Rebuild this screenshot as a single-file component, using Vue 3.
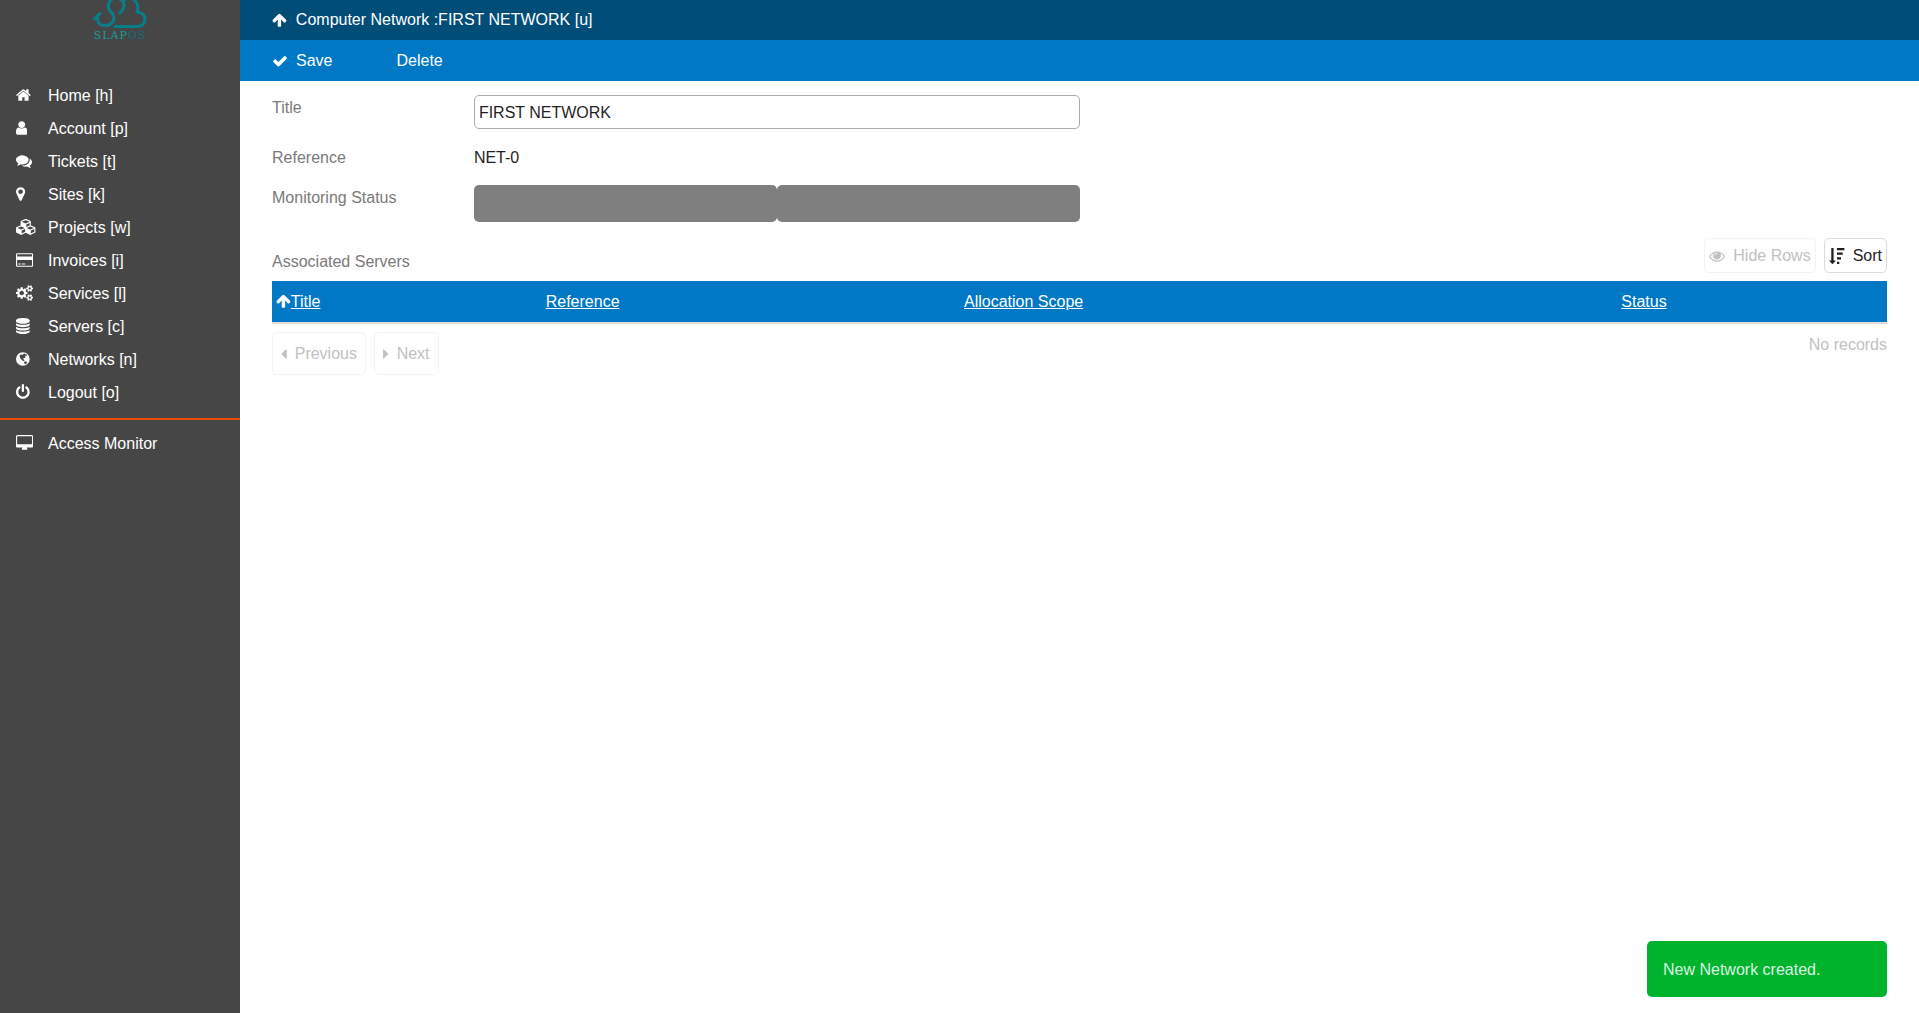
<script setup>
import { ref } from 'vue'

const icons = {
  home: ['64 0 1664 1792', 'M1472 992v480q0 26-19 45t-45 19h-384v-384h-256v384h-384q-26 0-45-19t-19-45v-480q0-1 .5-3t.5-3l575-474 575 474q1 2 1 6zm223-69l-62 74q-8 9-21 11h-3q-13 0-21-7l-692-577-692 577q-12 8-24 7-13-2-21-11l-62-74q-8-10-7-23.5t11-21.5l719-599q32-26 76-26t76 26l244 204v-195q0-14 9-23t23-9h192q14 0 23 9t9 23v408l219 182q10 8 11 21.5t-7 23.5z'],
  user: ['256 0 1280 1792', 'M1536 1399q0 109-62.5 187t-150.5 78h-854q-88 0-150.5-78t-62.5-187q0-85 8.5-160.5t31.5-152 58.5-131 94-89 134.5-34.5q131 128 313 128t313-128q76 0 134.5 34.5t94 89 58.5 131 31.5 152 8.5 160.5zm-256-887q0 159-112.5 271.5t-271.5 112.5-271.5-112.5-112.5-271.5 112.5-271.5 271.5-112.5 271.5 112.5 112.5 271.5z'],
  comments: ['0 0 1792 1792', 'M1408 768q0 139-94 257t-256.5 186.5-353.5 68.5q-86 0-176-16-124 88-278 128-36 9-86 16h-3q-11 0-20.5-8t-11.5-21q-1-3-1-6.5t.5-6.5 2-6l2.5-5 3.5-5.5 4-5 4.5-5 4-4.5q5-6 23-25t26-29.5 22.5-29 25-38.5 20.5-44q-124-72-195-177t-71-224q0-139 94-257t256.5-186.5 353.5-68.5 353.5 68.5 256.5 186.5 94 257zm384 256q0 120-71 224.5t-195 176.5q10 24 20.5 44t25 38.5 22.5 29 26 29.5 23 25q1 1 4 4.5t4.5 5 4 5 3.5 5.5l2.5 5 2 6 .5 6.5-1 6.5q-3 14-13 22t-22 7q-50-7-86-16-154-40-278-128-90 16-176 16-271 0-472-132 58 4 88 4 161 0 309-45t264-129q125-92 192-212t67-254q0-77-23-152 129 71 204 178t75 230z'],
  marker: ['384 0 1024 1792', 'M1152 640q0-106-75-181t-181-75-181 75-75 181 75 181 181 75 181-75 75-181zm256 0q0 109-33 179l-364 774q-16 33-47.5 52t-67.5 19-67.5-19-46.5-52l-365-774q-33-70-33-179 0-212 150-362t362-150 362 150 150 362z'],
  cubes: ['0 0 2304 1792', 'M640 1632l384-192v-314l-384 164v342zm-64-454l404-173-404-173-404 173zm1088 454l384-192v-314l-384 164v342zm-64-454l404-173-404-173-404 173zm-448-293l384-165v-266l-384 164v267zm-64-379l441-189-441-189-441 189zm1088 518v416q0 36-19 67t-52 47l-448 224q-25 14-57 14t-57-14l-448-224q-5-2-7-4-2 2-7 4l-448 224q-25 14-57 14t-57-14l-448-224q-33-16-52-47t-19-67v-416q0-38 21.5-70t56.5-48l434-186v-400q0-38 21.5-70t56.5-48l448-192q23-10 50-10t50 10l448 192q35 16 56.5 48t21.5 70v400l434 186q36 16 57 48t21 70z'],
  card: ['0 0 1920 1792', 'M1760 128q66 0 113 47t47 113v1216q0 66-47 113t-113 47h-1600q-66 0-113-47t-47-113v-1216q0-66 47-113t113-47h1600zm-1600 128q-13 0-22.5 9.5t-9.5 22.5v224h1664v-224q0-13-9.5-22.5t-22.5-9.5h-1600zm1600 1280q13 0 22.5-9.5t9.5-22.5v-608h-1664v608q0 13 9.5 22.5t22.5 9.5h1600zM256 1408v-128h256v128h-256zm384 0v-128h384v128h-384z'],
  cogs: ['0 0 1920 1792', 'M896 896q0-106-75-181t-181-75-181 75-75 181 75 181 181 75 181-75 75-181zm768 512q0-52-38-90t-90-38-90 38-38 90q0 53 37.5 90.5t90.5 37.5 90.5-37.5 37.5-90.5zm0-1024q0-52-38-90t-90-38-90 38-38 90q0 53 37.5 90.5t90.5 37.5 90.5-37.5 37.5-90.5zm-384 421v185q0 10-7 19.5t-16 10.5l-155 24q-11 35-32 76 34 48 90 115 7 11 7 20 0 12-7 19-23 30-82.5 89.5t-78.5 59.5q-11 0-21-7l-115-90q-37 19-77 31-11 108-23 155-7 24-30 24h-186q-11 0-20-7.5t-10-17.5l-23-153q-34-10-75-31l-118 89q-7 7-20 7-11 0-21-8-144-133-144-160 0-9 7-19 10-14 41-53t47-61q-23-44-35-82l-152-24q-10-1-17-9.5t-7-19.5v-185q0-10 7-19.5t16-10.5l155-24q11-35 32-76-34-48-90-115-7-11-7-20 0-12 7-20 22-30 82-89t79-59q11 0 21 7l115 90q34-18 77-32 11-108 23-154 7-24 30-24h186q11 0 20 7.5t10 17.5l23 153q34 10 75 31l118-89q8-7 20-7 11 0 21 8 144 133 144 160 0 8-7 19-12 16-42 54t-45 60q23 48 34 82l152 23q10 2 17 10.5t7 19.5zm640 533v140q0 16-149 31-12 27-30 52 51 113 51 138 0 4-4 7-122 71-124 71-8 0-46-47t-52-68q-20 2-30 2t-30-2q-14 21-52 68t-46 47q-2 0-124-71-4-3-4-7 0-25 51-138-18-25-30-52-149-15-149-31v-140q0-16 149-31 13-29 30-52-51-113-51-138 0-4 4-7 4-2 35-20t59-34 30-16q8 0 46 46.5t52 67.5q20-2 30-2t30 2q51-71 92-112l6-2q4 0 124 70 4 3 4 7 0 25-51 138 17 23 30 52 149 15 149 31zm0-1024v140q0 16-149 31-12 27-30 52 51 113 51 138 0 4-4 7-122 71-124 71-8 0-46-47t-52-68q-20 2-30 2t-30-2q-14 21-52 68t-46 47q-2 0-124-71-4-3-4-7 0-25 51-138-18-25-30-52-149-15-149-31v-140q0-16 149-31 13-29 30-52-51-113-51-138 0-4 4-7 4-2 35-20t59-34 30-16q8 0 46 46.5t52 67.5q20-2 30-2t30 2q51-71 92-112l6-2q4 0 124 70 4 3 4 7 0 25-51 138 17 23 30 52 149 15 149 31z'],
  database: ['128 0 1536 1792', 'M896 768q237 0 443-43t325-127v170q0 69-103 128t-280 93.5-385 34.5-385-34.5-280-93.5-103-128v-170q119 84 325 127t443 43zm0 768q237 0 443-43t325-127v170q0 69-103 128t-280 93.5-385 34.5-385-34.5-280-93.5-103-128v-170q119 84 325 127t443 43zm0-384q237 0 443-43t325-127v170q0 69-103 128t-280 93.5-385 34.5-385-34.5-280-93.5-103-128v-170q119 84 325 127t443 43zm0-1152q208 0 385 34.5t280 93.5 103 128v128q0 69-103 128t-280 93.5-385 34.5-385-34.5-280-93.5-103-128v-128q0-69 103-128t280-93.5 385-34.5z'],
  globe: ['128 0 1536 1792', 'M896 128a768 768 0 1 1 0 1536a768 768 0 1 1 0-1536zM520 520L640 860 800 1024 1024 1136 1080 1024 912 856 1192 720 1136 500 1360 560 1360 408 1024 270 856 440 688 352zM1080 1170L1024 1360 1192 1490 1380 1304 1304 1170z'],
  power: ['128 0 1536 1792', 'M1664 896q0 156-61 298t-164 245-245 164-298 61-298-61-245-164-164-245-61-298q0-182 80.5-343t226.5-270q43-32 95.5-25t83.5 50q32 42 24.5 94.5t-49.5 84.5q-98 74-151.5 181t-53.5 228q0 104 40.5 198.5t109.5 163.5 163.5 109.5 198.5 40.5 198.5-40.5 163.5-109.5 109.5-163.5 40.5-198.5q0-121-53.5-228t-151.5-181q-42-32-49.5-84.5t24.5-94.5q31-43 84-50t95 25q146 109 226.5 270t80.5 343zm-640-768v640q0 52-38 90t-90 38-90-38-38-90v-640q0-52 38-90t90-38 90 38 38 90z'],
  desktop: ['0 0 1920 1792', 'M1792 992v-832q0-13-9.5-22.5t-22.5-9.5h-1600q-13 0-22.5 9.5t-9.5 22.5v832q0 13 9.5 22.5t22.5 9.5h1600q13 0 22.5-9.5t9.5-22.5zm128-832v1088q0 66-47 113t-113 47h-544q0 37 16 77.5t32 71 16 43.5q0 26-19 45t-45 19h-512q-26 0-45-19t-19-45q0-14 16-44t32-70 16-78h-544q-66 0-113-47t-47-113v-1088q0-66 47-113t113-47h1600q66 0 113 47t47 113z'],
  up: ['64 0 1664 1792', 'M1675 971q0 51-37 90l-75 75q-38 38-91 38-54 0-90-38l-294-293v704q0 52-37.5 84.5t-90.5 32.5h-128q-53 0-90.5-32.5t-37.5-84.5v-704l-294 293q-36 38-90 38t-90-38l-75-75q-38-38-38-90 0-53 38-91l651-651q35-37 90-37 54 0 91 37l651 651q37 39 37 91z'],
  check: ['0 0 1792 1792', 'M1671 566q0 40-28 68l-724 724-136 136q-28 28-68 28t-68-28l-136-136-362-362q-28-28-28-68t28-68l136-136q28-28 68-28t68 28l294 295 656-657q28-28 68-28t68 28l136 136q28 28 28 68z'],
  left: ['576 0 640 1792', 'M1216 448v896q0 26-19 45t-45 19-45-19l-448-448q-19-19-19-45t19-45l448-448q19-19 45-19t45 19 19 45z'],
  right: ['576 0 640 1792', 'M1152 896q0 26-19 45l-448 448q-19 19-45 19t-45-19-19-45v-896q0-26 19-45t45-19 45 19l448 448q19 19 19 45z'],
  eye: ['0 0 1792 1792', 'M1664 960q-152-236-381-353 61 104 61 225 0 185-131.5 316.5t-316.5 131.5-316.5-131.5-131.5-316.5q0-121 61-225-229 117-381 353 133 205 333.5 326.5t434.5 121.5 434.5-121.5 333.5-326.5zm-720-384q0-20-14-34t-34-14q-125 0-214.5 89.5t-89.5 214.5q0 20 14 34t34 14 34-14 14-34q0-86 61-147t147-61q20 0 34-14t14-34zm848 384q0 34-20 69-140 230-376.5 368.5t-499.5 138.5-499.5-139-376.5-368q-20-35-20-69t20-69q140-229 376.5-368t499.5-139 499.5 139 376.5 368q20 35 20 69z'],
  sort: ['0 0 1792 1792', 'M736 1440q0 12-10 24l-319 319q-10 9-23 9-12 0-23-9l-320-320q-15-16-7-35 8-20 30-20h192v-1376q0-14 9-23t23-9h192q14 0 23 9t9 23v1376h192q14 0 23 9t9 23zM896 0h832v256h-832zM896 512h640v256h-640zM896 1024h448v256h-448zM896 1536h256v256h-256z']
}

const menu = [
  { icon: 'home', text: 'Home [h]' },
  { icon: 'user', text: 'Account [p]' },
  { icon: 'comments', text: 'Tickets [t]' },
  { icon: 'marker', text: 'Sites [k]' },
  { icon: 'cubes', text: 'Projects [w]' },
  { icon: 'card', text: 'Invoices [i]' },
  { icon: 'cogs', text: 'Services [l]' },
  { icon: 'database', text: 'Servers [c]' },
  { icon: 'globe', text: 'Networks [n]' },
  { icon: 'power', text: 'Logout [o]' }
]
const columns = [
  { label: 'Title', cls: 'narrow', sorted: true },
  { label: 'Reference', cls: 'medium' },
  { label: 'Allocation Scope', cls: 'wide' },
  { label: 'Status', cls: 'narrow' }
]
const title = ref('FIRST NETWORK')
</script>

<template>
  <div class="page">
    <aside class="sidebar">
      <a class="logo" href="#">
        <svg class="cloud" viewBox="0 0 56 28" width="56" height="28" aria-hidden="true">
          <path d="M2.5 19L8 13.5M6 15Q4 25 12 25.5Q20 26 22 19Q22 14 18 11Q14 5 19 0Q24-4 30 0Q35 6 28 13M30 1Q35-3 41-1Q48 4 45 12Q53 13 53 19Q53 26 45 26.5H23" />
        </svg>
        <span class="brand">SLAP<span class="brand-end">OS</span></span>
      </a>
      <nav>
        <ul class="menu">
          <li v-for="item in menu" :key="item.icon">
            <a href="#">
              <span class="slot"><svg class="icon" :viewBox="icons[item.icon][0]"><path :d="icons[item.icon][1]" /></svg></span>{{ item.text }}
            </a>
          </li>
        </ul>
        <ul class="menu extra">
          <li>
            <a href="#">
              <span class="slot"><svg class="icon" :viewBox="icons.desktop[0]"><path :d="icons.desktop[1]" /></svg></span>Access Monitor
            </a>
          </li>
        </ul>
      </nav>
    </aside>

    <div class="main">
      <header>
        <div class="crumb">
          <a href="#"><svg class="icon" :viewBox="icons.up[0]"><path :d="icons.up[1]" /></svg>Computer Network :FIRST NETWORK [u]</a>
        </div>
        <div class="actions">
          <button type="submit" form="network"><svg class="icon" :viewBox="icons.check[0]"><path :d="icons.check[1]" /></svg>Save</button>
          <a href="#">Delete</a>
        </div>
      </header>

      <main>
        <form id="network" @submit.prevent>
          <div class="field">
            <label for="title">Title</label>
            <input id="title" v-model="title" type="text">
          </div>
          <div class="field reference">
            <span class="label">Reference</span>
            <span>NET-0</span>
          </div>
          <div class="field">
            <span class="label">Monitoring Status</span>
            <div class="status"><span></span><span></span></div>
          </div>
        </form>

        <section>
          <div class="list-head">
            <h2>Associated Servers</h2>
            <div class="tools">
              <button type="button" disabled><svg class="icon" :viewBox="icons.eye[0]"><path :d="icons.eye[1]" /></svg>Hide Rows</button>
              <button type="button"><svg class="icon" :viewBox="icons.sort[0]"><path :d="icons.sort[1]" /></svg>Sort</button>
            </div>
          </div>
          <table>
            <thead>
              <tr>
                <th v-for="col in columns" :key="col.label" :class="col.cls" scope="col">
                  <svg v-if="col.sorted" class="icon" :viewBox="icons.up[0]"><path :d="icons.up[1]" /></svg><a href="#">{{ col.label }}</a>
                </th>
              </tr>
            </thead>
          </table>
          <div class="list-foot">
            <div class="pager">
              <button type="button" disabled><svg class="icon" :viewBox="icons.left[0]"><path :d="icons.left[1]" /></svg>Previous</button>
              <button type="button" disabled><svg class="icon" :viewBox="icons.right[0]"><path :d="icons.right[1]" /></svg>Next</button>
            </div>
            <span class="count">No records</span>
          </div>
        </section>
      </main>
    </div>

    <div class="toast" role="status">New Network created.</div>
  </div>
</template>

<style>
body {
  background: #fff;
}
</style>

<style scoped>
.page {
  display: flex;
  min-height: 100vh;
  font-family: "Liberation Sans", Arial, sans-serif;
  font-size: 16px;
  line-height: 24px;
  color: #1f1f1f;
}
.page * {
  box-sizing: border-box;
}
a {
  color: inherit;
  text-decoration: none;
}
button,
input {
  font: inherit;
  color: inherit;
}
.icon {
  flex: none;
  height: 16px;
  fill: currentColor;
}
.sidebar {
  flex: none;
  width: 240px;
  background: #464646;
  color: #fff;
}
.logo {
  display: flex;
  flex-direction: column;
  align-items: center;
  height: 79px;
}
.cloud {
  fill: none;
  stroke: #05808b;
  stroke-width: 3;
  stroke-linejoin: round;
  stroke-linecap: round;
}
.brand {
  font: 11px/16px "DejaVu Serif", serif;
  letter-spacing: 1px;
  color: #1c9c98;
}
.brand-end {
  color: #126f7b;
}
.menu {
  list-style: none;
  margin: 0;
  padding: 0;
}
.menu a {
  display: flex;
  align-items: center;
  height: 33px;
  padding-left: 16px;
}
.slot {
  display: flex;
  flex: none;
  width: 32px;
  padding-bottom: 1px;
}
.extra {
  margin-top: 9px;
  padding-top: 7px;
  border-top: 2px solid #ea4a08;
}
.main {
  flex: 1;
  min-width: 0;
}
.crumb,
.actions {
  display: flex;
  align-items: center;
  padding: 0 32px;
  color: #fff;
}
.crumb {
  height: 40px;
  background: #004d78;
}
.actions {
  height: 41px;
  gap: 64px;
  background: #0078c6;
}
.crumb a,
.actions button {
  display: flex;
  align-items: center;
  gap: 9px;
}
.actions button {
  padding: 0;
  border: 0;
  background: none;
  gap: 8px;
}
main {
  padding: 14px 32px;
}
.field {
  display: flex;
  align-items: flex-start;
}
.field label,
.label {
  width: 12.5%;
  padding-top: 1px;
  color: #7a7a7a;
}
.field input {
  width: 37.5%;
  height: 34px;
  padding: 2px 4px 0;
  border: 1px solid #aaa;
  border-radius: 5px;
  background: #fff;
}
.reference {
  align-items: flex-end;
  margin: 16px 0 15px;
}
.status {
  display: flex;
  width: 37.5%;
  height: 37px;
}
.status span {
  flex: 1;
  border-radius: 5px;
  background: #7f7f7f;
}
.list-head {
  display: flex;
  justify-content: space-between;
  align-items: flex-start;
  height: 43px;
  margin-top: 16px;
}
h2 {
  margin: 12px 0 0;
  font-size: 16px;
  font-weight: normal;
  color: #7a7a7a;
}
.tools,
.pager {
  display: flex;
  gap: 8px;
}
.tools button,
.pager button {
  display: flex;
  align-items: center;
  gap: 8px;
  height: 35px;
  padding: 0 4px;
  border: 1px solid #ddd;
  border-radius: 5px;
  background: #fff;
}
.tools button:disabled,
.pager button:disabled {
  border-color: #f3f3f3;
  color: #c1c1c1;
}
.pager button {
  height: 43px;
  padding: 0 8px;
}
table {
  width: 100%;
  table-layout: fixed;
  border-collapse: collapse;
}
th {
  height: 42px;
  padding: 0 4px;
  border-bottom: 2px solid #ddd;
  background: #0078c6;
  color: #fff;
  font-weight: normal;
  text-align: left;
}
th a {
  text-decoration: underline;
}
th .icon {
  vertical-align: -2px;
}
.narrow {
  width: 16.7%;
}
.medium {
  width: 25.9%;
}
.wide {
  width: 40.7%;
}
.list-foot {
  display: flex;
  justify-content: space-between;
  padding-top: 8px;
}
.count {
  padding-top: 1px;
  color: #c1c1c1;
}
.toast {
  position: fixed;
  right: 32px;
  bottom: 16px;
  width: 240px;
  padding: 17px 16px 15px;
  border-radius: 5px;
  background: #00b32d;
  color: #d9f4e0;
}
</style>
